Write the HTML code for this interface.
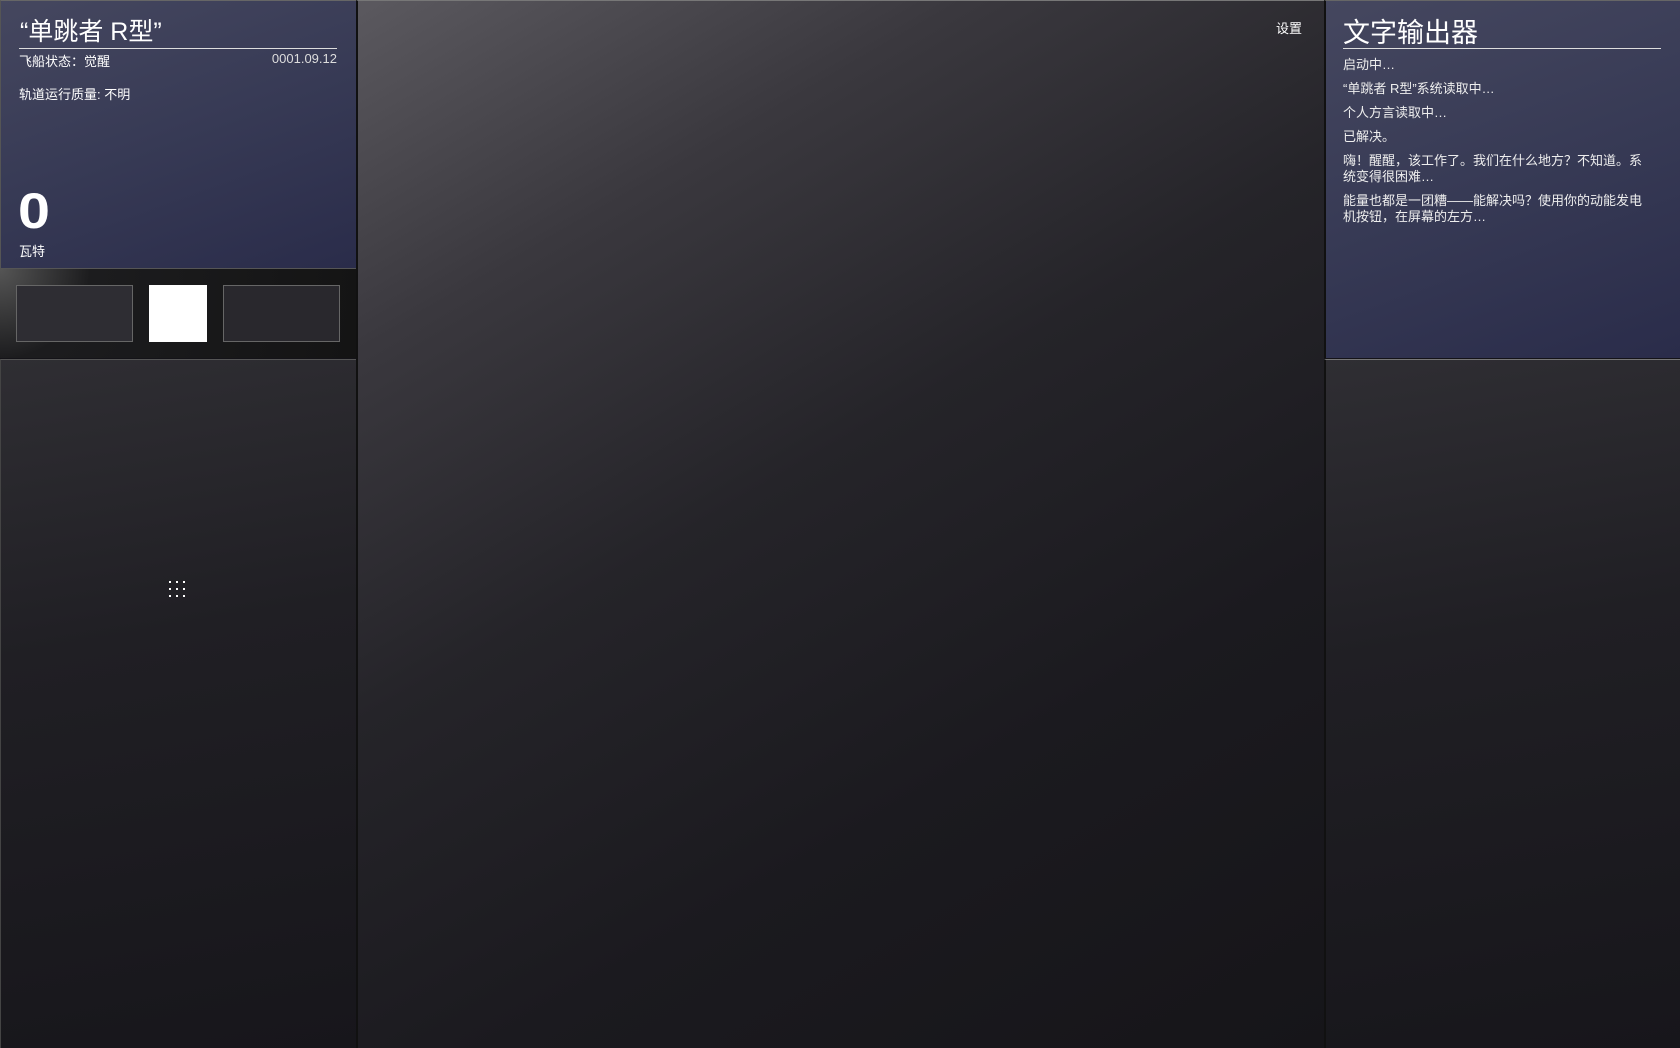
<!DOCTYPE html>
<html><head><meta charset="utf-8"><style>
*{margin:0;padding:0;box-sizing:border-box}
body{width:1680px;height:1048px;overflow:hidden;background:#141318;font-family:"Liberation Sans","Noto Sans CJK SC",sans-serif;color:#fff;position:relative}
.abs{position:absolute}
.blue{background:linear-gradient(160deg,#45475f 0%,#373a55 50%,#2a2c4a 100%);border-top:1px solid #666;border-left:1px solid #555}
.dark{background:linear-gradient(170deg,#2f2e33 0%,#201f24 40%,#17161b 100%);border-top:1px solid #555;border-left:1px solid #444}
.t{font-size:13px;white-space:nowrap}
.log p{font-size:13px;line-height:16px;margin-bottom:8px;color:#eee}
</style></head><body>
<div class="abs blue" style="left:0;top:0;width:356px;height:268px"></div>
<div class="abs" style="left:20px;top:12px;font-size:25px">“单跳者 R型”</div>
<div class="abs" style="left:19px;top:48px;width:318px;height:1px;background:#ddd"></div>
<div class="abs t" style="left:19px;top:51px">飞船状态：觉醒</div>
<div class="abs t" style="right:1343px;top:51px;color:#ddd">0001.09.12</div>
<div class="abs t" style="left:19px;top:84px">轨道运行质量: 不明</div>
<div class="abs" style="left:18px;top:185px;font-size:50px;font-weight:bold;line-height:52px;transform:scaleX(1.15);transform-origin:left">0</div>
<div class="abs t" style="left:19px;top:241px">瓦特</div>
<div class="abs" style="left:0;top:268px;width:356px;height:90px;background:radial-gradient(circle at 0 0,#555 0,#1c1c1e 90px,#141414 100%);border-top:1px solid #555"></div>
<div class="abs" style="left:16px;top:285px;width:117px;height:57px;background:#2e2d33;border:1px solid #666"></div>
<div class="abs" style="left:149px;top:285px;width:58px;height:57px;background:#fff"></div>
<div class="abs" style="left:223px;top:285px;width:117px;height:57px;background:#29282d;border:1px solid #666"></div>
<div class="abs dark" style="left:0;top:359px;width:356px;height:689px"></div>
<svg class="abs" style="left:168px;top:580px" width="20" height="20"><g fill="#fff"><rect x="1" y="1" width="2" height="2"/><rect x="8" y="1" width="2" height="2"/><rect x="15" y="1" width="2" height="2"/><rect x="1" y="8" width="2" height="2"/><rect x="8" y="8" width="2" height="2"/><rect x="15" y="8" width="2" height="2"/><rect x="1" y="15" width="2" height="2"/><rect x="8" y="15" width="2" height="2"/><rect x="15" y="15" width="2" height="2"/></g></svg>
<div class="abs" style="left:356px;top:0;width:968px;height:1048px;background:linear-gradient(150deg,#5b595f 0%,#3a383e 22%,#252429 45%,#1b1a1f 70%,#161519 100%);border-left:2px solid #111;border-top:1px solid #777"></div>
<div class="abs t" style="left:1276px;top:18px">设置</div>
<div class="abs blue" style="left:1324px;top:0;width:356px;height:358px;border-left:2px solid #111"></div>
<div class="abs" style="left:1343px;top:11px;font-size:27px">文字输出器</div>
<div class="abs" style="left:1343px;top:48px;width:318px;height:1px;background:#ddd"></div>
<div class="abs log" style="left:1343px;top:57px;width:305px">
<p>启动中…</p><p>“单跳者 R型”系统读取中…</p><p>个人方言读取中…</p><p>已解决。</p>
<p>嗨！醒醒，该工作了。我们在什么地方？不知道。系统变得很困难…</p>
<p>能量也都是一团糟——能解决吗？使用你的动能发电机按钮，在屏幕的左方…</p></div>
<div class="abs dark" style="left:1324px;top:359px;width:356px;height:689px;border-left:2px solid #111;border-top:1px solid #777"></div>
</body></html>
